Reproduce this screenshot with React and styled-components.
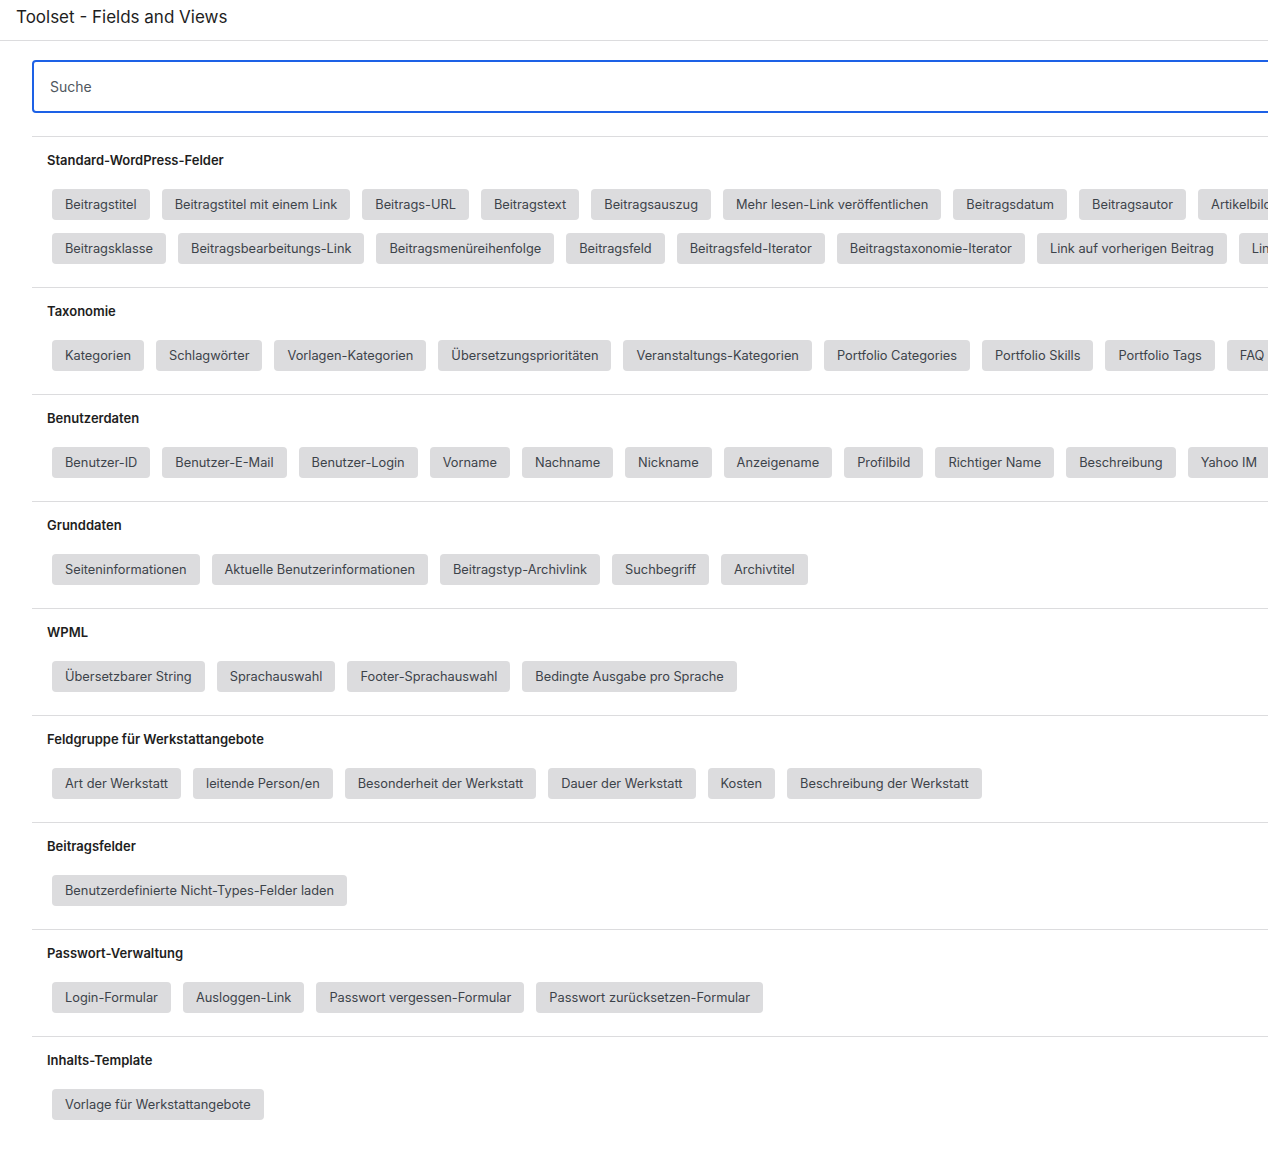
import React from "react";
import styled, { createGlobalStyle } from "styled-components";

const GlobalStyle = createGlobalStyle`
  body {
    margin: 0;
    background: #ffffff;
    font-family: Inter, "Noto Sans", "Liberation Sans", sans-serif;
    overflow: hidden;
  }
`;

const Page = styled.div`
  width: 1268px;
  height: 1156px;
  overflow: hidden;
  background: #fff;
`;

const Header = styled.header`
  height: 41px;
  border-bottom: 1px solid #dcdcde;
  display: flex;
  align-items: center;
  padding: 0 16px;
  box-sizing: border-box;
`;

const Title = styled.h1`
  margin: -6px 0 0;
  font-size: 17px;
  font-weight: 400;
  color: #1e1e1e;
`;

const Body = styled.div`
  width: 1700px;
  padding: 19px 0 0 32px;
`;

const SearchInput = styled.input`
  display: block;
  width: 100%;
  height: 53px;
  box-sizing: border-box;
  border: 2px solid #1d61e6;
  border-radius: 4px;
  padding: 0 16px;
  font-family: inherit;
  font-size: 14px;
  color: #1e1e1e;
  outline: none;
  &::placeholder {
    color: #50575e;
  }
`;

const SectionList = styled.div`
  margin-top: 23px;
`;

const Section = styled.section`
  border-top: 1px solid #dcdcde;
  padding: 14px 0 23px;
`;

const Heading = styled.h3`
  margin: 0 0 20px 15px;
  font-size: 13px;
  line-height: 18px;
  font-weight: 600;
  color: #1e1e1e;
`;

const ChipRows = styled.div`
  display: flex;
  flex-direction: column;
  gap: 13px;
  padding-left: 20px;
`;

const ChipRow = styled.div`
  display: flex;
  flex-wrap: nowrap;
  gap: 12px;
`;

const Chip = styled.button`
  flex: none;
  height: 31px;
  padding: 0 13px;
  border: none;
  border-radius: 4px;
  background: #dcdcde;
  color: #3c434a;
  font-family: inherit;
  font-size: 12.8px;
  white-space: nowrap;
  cursor: pointer;
`;

const sections = [
  {
    title: "Standard-WordPress-Felder",
    rows: [
      [
        "Beitragstitel",
        "Beitragstitel mit einem Link",
        "Beitrags-URL",
        "Beitragstext",
        "Beitragsauszug",
        "Mehr lesen-Link veröffentlichen",
        "Beitragsdatum",
        "Beitragsautor",
        "Artikelbild",
        "Beitrags-ID",
      ],
      [
        "Beitragsklasse",
        "Beitragsbearbeitungs-Link",
        "Beitragsmenüreihenfolge",
        "Beitragsfeld",
        "Beitragsfeld-Iterator",
        "Beitragstaxonomie-Iterator",
        "Link auf vorherigen Beitrag",
        "Link auf nächsten Beitrag",
      ],
    ],
  },
  {
    title: "Taxonomie",
    rows: [
      [
        "Kategorien",
        "Schlagwörter",
        "Vorlagen-Kategorien",
        "Übersetzungsprioritäten",
        "Veranstaltungs-Kategorien",
        "Portfolio Categories",
        "Portfolio Skills",
        "Portfolio Tags",
        "FAQ Categories",
      ],
    ],
  },
  {
    title: "Benutzerdaten",
    rows: [
      [
        "Benutzer-ID",
        "Benutzer-E-Mail",
        "Benutzer-Login",
        "Vorname",
        "Nachname",
        "Nickname",
        "Anzeigename",
        "Profilbild",
        "Richtiger Name",
        "Beschreibung",
        "Yahoo IM",
        "Jabber",
      ],
    ],
  },
  {
    title: "Grunddaten",
    rows: [
      [
        "Seiteninformationen",
        "Aktuelle Benutzerinformationen",
        "Beitragstyp-Archivlink",
        "Suchbegriff",
        "Archivtitel",
      ],
    ],
  },
  {
    title: "WPML",
    rows: [
      [
        "Übersetzbarer String",
        "Sprachauswahl",
        "Footer-Sprachauswahl",
        "Bedingte Ausgabe pro Sprache",
      ],
    ],
  },
  {
    title: "Feldgruppe für Werkstattangebote",
    rows: [
      [
        "Art der Werkstatt",
        "leitende Person/en",
        "Besonderheit der Werkstatt",
        "Dauer der Werkstatt",
        "Kosten",
        "Beschreibung der Werkstatt",
      ],
    ],
  },
  {
    title: "Beitragsfelder",
    rows: [["Benutzerdefinierte Nicht-Types-Felder laden"]],
  },
  {
    title: "Passwort-Verwaltung",
    rows: [
      [
        "Login-Formular",
        "Ausloggen-Link",
        "Passwort vergessen-Formular",
        "Passwort zurücksetzen-Formular",
      ],
    ],
  },
  {
    title: "Inhalts-Template",
    rows: [["Vorlage für Werkstattangebote"]],
  },
];

export default function App() {
  return (
    <Page>
      <GlobalStyle />
      <Header>
        <Title>Toolset - Fields and Views</Title>
      </Header>
      <Body>
        <SearchInput placeholder="Suche" />
        <SectionList>
          {sections.map((section) => (
            <Section key={section.title}>
              <Heading>{section.title}</Heading>
              <ChipRows>
                {section.rows.map((row, i) => (
                  <ChipRow key={i}>
                    {row.map((label) => (
                      <Chip key={label}>{label}</Chip>
                    ))}
                  </ChipRow>
                ))}
              </ChipRows>
            </Section>
          ))}
        </SectionList>
      </Body>
    </Page>
  );
}
